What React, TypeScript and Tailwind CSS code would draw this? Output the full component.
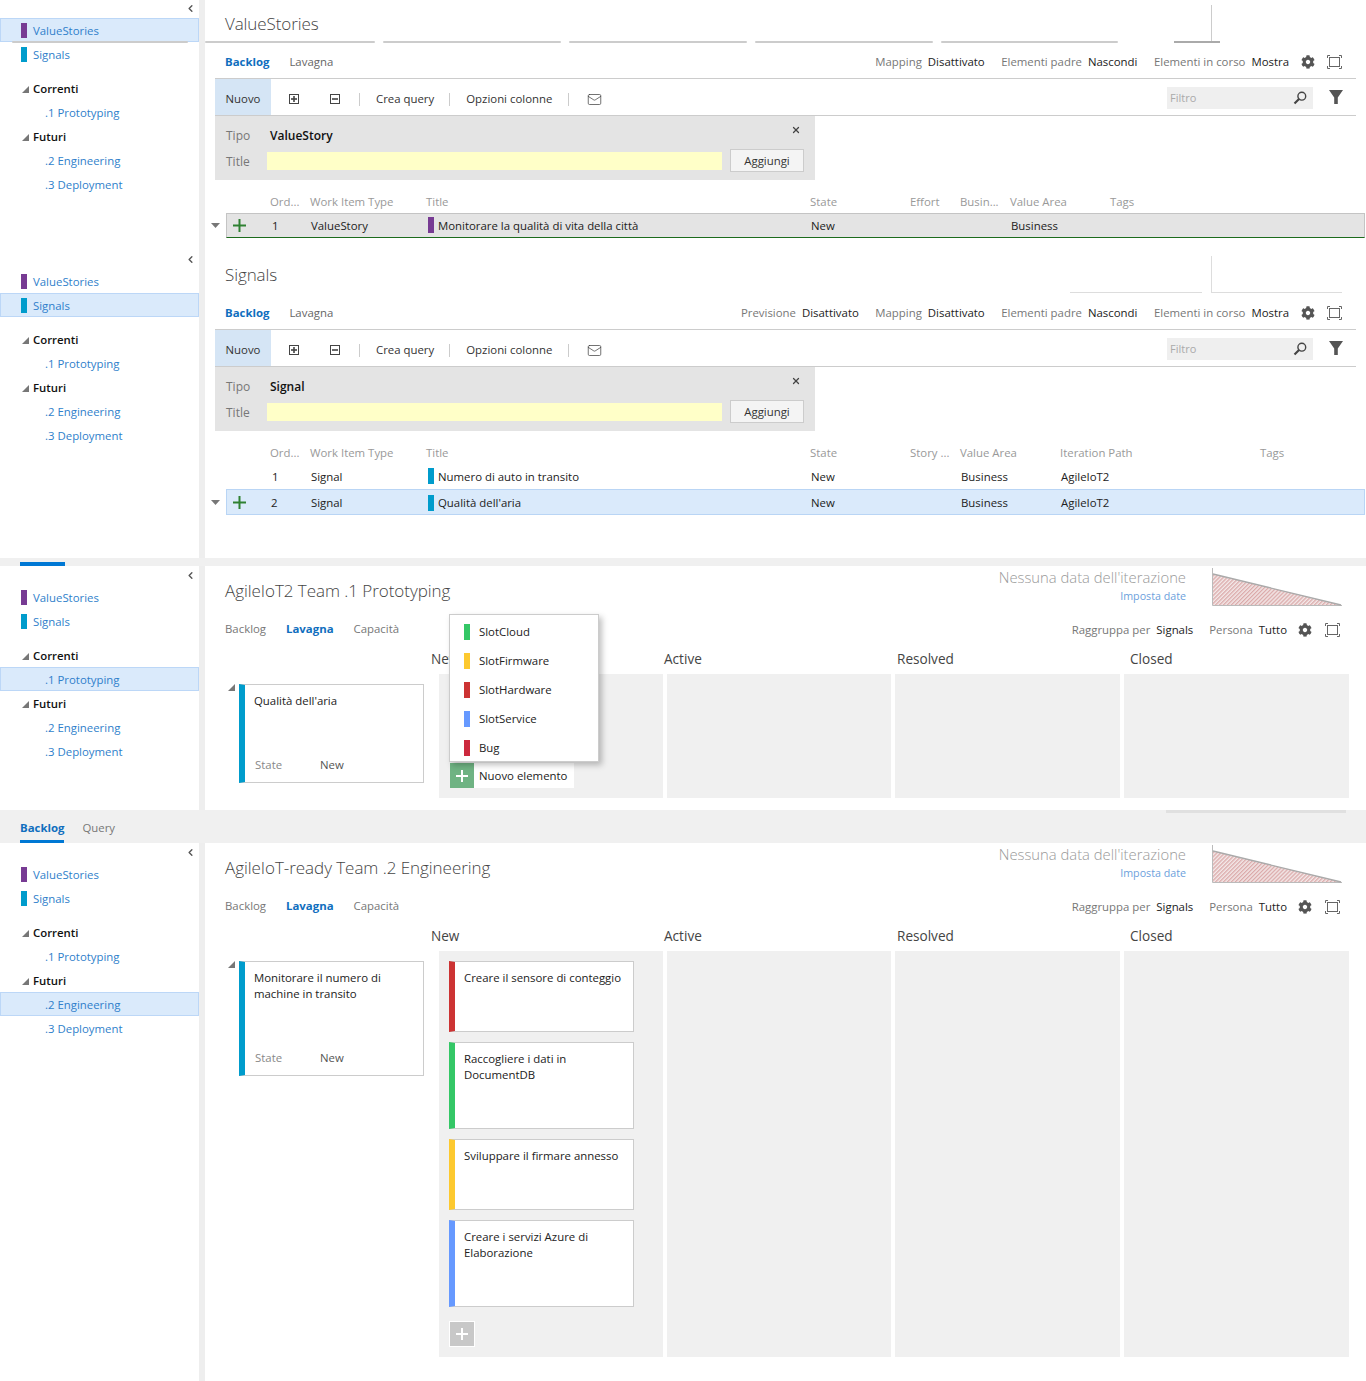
import React from 'react';
import { ChevronLeft, Mail, X } from 'lucide-react';
import { FaCog } from 'react-icons/fa';

const PURPLE = 'bg-[#773b93]';
const CYAN = 'bg-[#009ccc]';

const Tri = ({ className = '' }: { className?: string }) => (
  <svg width="7" height="7" viewBox="0 0 7 7" className={className}>
    <polygon points="7,0 7,7 0,7" fill="#777" />
  </svg>
);

const Caret = () => (
  <svg width="9" height="5" viewBox="0 0 9 5">
    <polygon points="0,0 9,0 4.5,5" fill="#777" />
  </svg>
);

const FocusIcon = () => (
  <svg width="15" height="14" viewBox="0 0 15 14" fill="none" stroke="#666" strokeWidth="1">
    <path d="M.5 3V.5H3M12 .5h2.5V3M14.5 11v2.5H12M3 13.5H.5V11" />
    <rect x="2.5" y="2.5" width="10" height="9" />
  </svg>
);

const BoxIcon = ({ plus }: { plus?: boolean }) => (
  <svg width="10" height="10" viewBox="0 0 10 10" fill="none" stroke="#444">
    <rect x=".5" y=".5" width="9" height="9" />
    <path d="M2 5h6" strokeWidth="1.6" />
    {plus && <path d="M5 2v6" strokeWidth="1.6" />}
  </svg>
);

const Funnel = () => (
  <svg width="14" height="14" viewBox="0 0 14 14">
    <path d="M0 0h14L8.8 7.5V14H5.2V7.5z" fill="#555" />
  </svg>
);

const SearchIcon = () => (
  <svg width="14" height="14" viewBox="0 0 14 14" fill="none" stroke="#444">
    <circle cx="8.8" cy="5.2" r="3.9" strokeWidth="1.4" />
    <path d="M6 8L1.5 12.5" strokeWidth="2.2" />
  </svg>
);

const GreenPlus = () => (
  <svg width="13" height="13" viewBox="0 0 13 13">
    <path d="M6.5 0v13M0 6.5h13" stroke="#2f8132" strokeWidth="2" />
  </svg>
);

const WhitePlus = () => (
  <svg width="12" height="12" viewBox="0 0 12 12">
    <path d="M6 0v12M0 6h12" stroke="#fff" strokeWidth="2" />
  </svg>
);

const Burndown = () => (
  <svg width="131" height="38" viewBox="0 0 131 38" className="mt-[1px]">
    <defs>
      <pattern id="hatch" width="2.8" height="2.8" patternUnits="userSpaceOnUse" patternTransform="rotate(45)">
        <rect width="2.8" height="2.8" fill="#f3e8e8" />
        <rect width="1.3" height="2.8" fill="#dba9a9" />
      </pattern>
    </defs>
    <polygon points="1,6 129,37 1,37" fill="url(#hatch)" />
    <path d="M.5 0v37.5H130" stroke="#bbb" fill="none" />
    <path d="M1 6l128 31" stroke="#aaa" strokeWidth="1.3" fill="none" />
  </svg>
);

function NavRow({ selected, children }: { selected?: boolean; children: React.ReactNode }) {
  return (
    <div className={`h-[24px] pt-[2px] flex items-center text-[#2f7fcb] border ${selected ? 'bg-[#daeafb] border-[#bcd7f7]' : 'border-transparent'}`}>
      {children}
    </div>
  );
}

function Sidebar({ selected, tabLine }: { selected: string; tabLine?: boolean }) {
  return (
    <div className="relative w-[199px] shrink-0 bg-white">
      <div className="h-[18px] flex justify-end items-start pt-[3px] pr-[3px]">
        <ChevronLeft size={11} strokeWidth={3} color="#555" />
      </div>
      <NavRow selected={selected === 'ValueStories'}>
        <span className={`w-[6px] h-[15px] ml-[20px] mr-[6px] mb-[2px] ${PURPLE}`} />ValueStories
      </NavRow>
      <NavRow selected={selected === 'Signals'}>
        <span className={`w-[6px] h-[15px] ml-[20px] mr-[6px] mb-[2px] ${CYAN}`} />Signals
      </NavRow>
      <div className="h-[10px]" />
      <div className="h-[24px] pt-[2px] flex items-center pl-[22px] font-semibold text-[#111]">
        <Tri className="mr-[4px]" />Correnti
      </div>
      <NavRow selected={selected === 'Prototyping'}><span className="pl-[44px]">.1 Prototyping</span></NavRow>
      <div className="h-[24px] pt-[2px] flex items-center pl-[22px] font-semibold text-[#111]">
        <Tri className="mr-[4px]" />Futuri
      </div>
      <NavRow selected={selected === 'Engineering'}><span className="pl-[44px]">.2 Engineering</span></NavRow>
      <NavRow><span className="pl-[44px]">.3 Deployment</span></NavRow>
      {tabLine && <div className="absolute top-[41px] left-[12px] w-[176px] h-[2px] bg-[#ccc] rounded" />}
    </div>
  );
}

const Opt = ({ label, value }: { label: string; value: string }) => (
  <span className="flex gap-[6px]">
    <span className="text-[#777]">{label}</span>
    <span className="text-[#222]">{value}</span>
  </span>
);

const Sep = () => <span className="block w-px h-[13px] bg-[#ccc]" />;

function Toolbar() {
  return (
    <div className="ml-[10px] w-[1141px] h-[37px] flex border-b border-[#ccc] text-[#333]">
      <span className="w-[56px] h-full pt-[4px] flex items-center justify-center bg-[#d5e5f5]">Nuovo</span>
      <div className="flex-1 flex items-center pt-[4px]">
        <span className="ml-[18px]"><BoxIcon plus /></span>
        <span className="ml-[31px]"><BoxIcon /></span>
        <span className="ml-[19px]"><Sep /></span>
        <span className="ml-[16px]">Crea query</span>
        <span className="ml-[15px]"><Sep /></span>
        <span className="ml-[16px]">Opzioni colonne</span>
        <span className="ml-[16px]"><Sep /></span>
        <span className="ml-[18px]"><Mail size={15} strokeWidth={1.2} color="#444" /></span>
        <div className="ml-auto mb-[2px] w-[146px] h-[22px] bg-[#efefef] flex items-center justify-between pl-[3px] pr-[6px] text-[11px] text-[#aaa]">
          Filtro
          <SearchIcon />
        </div>
        <span className="ml-[16px] mr-[13px] mb-[4px]"><Funnel /></span>
      </div>
    </div>
  );
}

function AddForm({ type }: { type: string }) {
  return (
    <div className="ml-[10px] w-[600px] h-[64px] bg-[#e4e4e4] pl-[11px] relative">
      <div className="h-[33px] pt-[6px] flex items-center">
        <span className="w-[44px] text-[#777] text-[12px]">Tipo</span>
        <span className="font-semibold text-[#111] text-[12px]">{type}</span>
      </div>
      <X size={10} strokeWidth={3} color="#444" className="absolute top-[9px] right-[14px]" />
      <div className="flex items-center">
        <span className="w-[41px] pt-[2px] text-[#777] text-[12px]">Title</span>
        <span className="w-[455px] h-[18px] bg-[#ffffc8]" />
        <span className="ml-[8px] w-[74px] h-[23px] bg-[#f4f4f4] border border-[#ccc] flex items-center justify-center text-[#333]">Aggiungi</span>
      </div>
    </div>
  );
}

function Strip({ color }: { color: string }) {
  return <span className={`w-[6px] h-[16px] mr-[4px] ${color}`} />;
}

function BacklogOne() {
  return (
    <div className="flex h-[251px] bg-white">
      <Sidebar selected="ValueStories" tabLine />
      <div className="w-[6px] bg-[#eeeeee]" />
      <div className="flex-1 min-w-0">
        <div className="h-[41px] grid grid-cols-[1006px_1fr]">
          <div className="pl-[20px] pt-[10px] text-[17px] tracking-[-0.1px] leading-[28px] font-light text-[#444]">ValueStories</div>
          <div className="mt-[5px] border-l border-[#ccc]" />
        </div>
        <div className="h-[3px] flex items-start">
          <span className="w-[170px] h-[2px] bg-[#ccc] rounded" />
          <span className="ml-[8px] w-[178px] h-[2px] bg-[#ccc] rounded" />
          <span className="ml-[8px] w-[178px] h-[2px] bg-[#ccc] rounded" />
          <span className="ml-[8px] w-[178px] h-[2px] bg-[#ccc] rounded" />
          <span className="ml-[8px] w-[177px] h-[2px] bg-[#ccc] rounded" />
          <span className="ml-[56px] w-[46px] h-[2px] bg-[#aaa]" />
        </div>
        <div className="h-[35px] pt-[2px] ml-[10px] w-[1141px] flex items-center border-b border-[#ccc] pl-[10px] pr-[14px]">
          <span className="font-bold text-[#106ebe]">Backlog</span>
          <span className="ml-[20px] text-[#666]">Lavagna</span>
          <div className="ml-auto flex items-center gap-[16.5px]">
            <Opt label="Mapping" value="Disattivato" />
            <Opt label="Elementi padre" value="Nascondi" />
            <Opt label="Elementi in corso" value="Mostra" />
            <FaCog size={14} color="#555" className="-ml-[5px]" />
            <span className="-ml-[4px]"><FocusIcon /></span>
          </div>
        </div>
        <Toolbar />
        <AddForm type="ValueStory" />
        <div className="mt-[10px] h-[23px] pt-px pl-[65px] grid grid-cols-[40px_116px_384px_100px_50px_50px_100px_1fr] items-center text-[#999]">
          <span>Ord...</span><span>Work Item Type</span><span>Title</span><span>State</span><span>Effort</span><span>Busin...</span><span>Value Area</span><span>Tags</span>
        </div>
        <div className="flex items-center h-[25px] mr-px">
          <span className="w-[21px] pl-[6px]"><Caret /></span>
          <div className="flex-1 h-full bg-[#e4e4e4] border border-[#c4c4c4] border-b-[#1c6b1c] pl-[6px] flex items-center text-[#222]">
            <GreenPlus />
            <div className="flex-1 pl-[24px] grid grid-cols-[40px_116px_384px_100px_50px_50px_100px_1fr] items-center">
              <span className="pl-[2px]">1</span>
              <span className="pl-[1px]">ValueStory</span>
              <span className="flex items-center pl-[2px]"><Strip color={PURPLE} />Monitorare la qualità di vita della città</span>
              <span className="pl-[1px]">New</span><span /><span />
              <span className="pl-[1px]">Business</span>
            </div>
          </div>
        </div>
      </div>
    </div>
  );
}

function BacklogTwo() {
  return (
    <div className="flex h-[307px] bg-white">
      <Sidebar selected="Signals" />
      <div className="w-[6px] bg-[#eeeeee]" />
      <div className="flex-1 min-w-0">
        <div className="h-[41px] grid grid-cols-[1006px_1fr]">
          <div className="pl-[20px] pt-[10px] text-[17px] tracking-[-0.1px] leading-[28px] font-light text-[#444]">Signals</div>
          <div className="mt-[5px] border-l border-[#ddd]" />
        </div>
        <div className="h-[3px] flex items-start">
          <span className="ml-[865px] w-[132px] h-px bg-[#ddd]" />
          <span className="ml-[9px] w-[131px] h-px bg-[#ddd]" />
        </div>
        <div className="h-[35px] pt-[2px] ml-[10px] w-[1141px] flex items-center border-b border-[#ccc] pl-[10px] pr-[14px]">
          <span className="font-bold text-[#106ebe]">Backlog</span>
          <span className="ml-[20px] text-[#666]">Lavagna</span>
          <div className="ml-auto flex items-center gap-[16.5px]">
            <Opt label="Previsione" value="Disattivato" />
            <Opt label="Mapping" value="Disattivato" />
            <Opt label="Elementi padre" value="Nascondi" />
            <Opt label="Elementi in corso" value="Mostra" />
            <FaCog size={14} color="#555" className="-ml-[5px]" />
            <span className="-ml-[4px]"><FocusIcon /></span>
          </div>
        </div>
        <Toolbar />
        <AddForm type="Signal" />
        <div className="mt-[10px] h-[23px] pt-px pl-[65px] grid grid-cols-[40px_116px_384px_100px_50px_100px_200px_1fr] items-center text-[#999]">
          <span>Ord...</span><span>Work Item Type</span><span>Title</span><span>State</span><span>Story ...</span><span>Value Area</span><span>Iteration Path</span><span>Tags</span>
        </div>
        <div className="h-[25px] pl-[65px] grid grid-cols-[40px_116px_384px_100px_50px_100px_200px_1fr] items-center text-[#222]">
          <span className="pl-[2px]">1</span>
          <span className="pl-[1px]">Signal</span>
          <span className="flex items-center pl-[2px]"><Strip color={CYAN} />Numero di auto in transito</span>
          <span className="pl-[1px]">New</span><span />
          <span className="pl-[1px]">Business</span><span className="pl-[1px]">AgileIoT2</span>
        </div>
        <div className="flex items-center h-[26px] mr-px">
          <span className="w-[21px] pl-[6px]"><Caret /></span>
          <div className="flex-1 h-full bg-[#daeafb] border border-[#b9d5f5] pl-[6px] flex items-center text-[#222]">
            <GreenPlus />
            <div className="flex-1 pl-[24px] pt-[2px] grid grid-cols-[40px_116px_384px_100px_50px_100px_200px_1fr] items-center">
              <span className="pl-[1px]">2</span>
              <span className="pl-[1px]">Signal</span>
              <span className="flex items-center pl-[2px]"><Strip color={CYAN} />Qualità dell'aria</span>
              <span className="pl-[1px]">New</span><span />
              <span className="pl-[1px]">Business</span><span className="pl-[1px]">AgileIoT2</span>
            </div>
          </div>
        </div>
      </div>
    </div>
  );
}

function Card({ color, title, wide, state }: { color: string; title: React.ReactNode; wide: string; state?: boolean }) {
  return (
    <div className={`w-[185px] ${wide} bg-white border border-[#ccc] border-l-[6px] ${color} pl-[9px] pr-[6px] pt-[8px] leading-[16px] text-[#222] flex flex-col`}>
      <div>{title}</div>
      {state && (
        <div className="mt-auto mb-[9px] flex pl-[1px]">
          <span className="w-[65px] text-[#888]">State</span>
          <span className="text-[#555]">New</span>
        </div>
      )}
    </div>
  );
}

function BoardHead({ title }: { title: string }) {
  return (
    <>
      <div className="h-[44px] flex items-start">
        <div className="pl-[20px] pt-[11px] text-[17px] tracking-[-0.05px] leading-[26px] font-light text-[#444] flex-1">{title}</div>
        <div className="text-right">
          <div className="text-[14.8px] leading-[20px] font-light text-[#999]">Nessuna data dell'iterazione</div>
          <div className="mt-px text-[#6d9fdc] text-[10.7px] leading-[16px]">Imposta date</div>
        </div>
        <div className="ml-[26px] mr-[23px] h-[40px]"><Burndown /></div>
      </div>
      <div className="h-[36px] flex items-center pl-[20px] pr-[26px]">
        <span className="text-[#777]">Backlog</span>
        <span className="ml-[20px] font-bold text-[#106ebe]">Lavagna</span>
        <span className="ml-[20px] text-[#777]">Capacità</span>
        <div className="ml-auto mt-[2px] flex items-center gap-[16px]">
          <Opt label="Raggruppa per" value="Signals" />
          <Opt label="Persona" value="Tutto" />
          <FaCog size={14} color="#555" className="-ml-[5px]" />
          <span className="-ml-[3px]"><FocusIcon /></span>
        </div>
      </div>
      <div className="h-[27px] pb-[2px] ml-[226px] grid grid-cols-[233px_233px_233px_1fr] items-center text-[13.6px] text-[#444]">
        <span>New</span><span>Active</span><span>Resolved</span><span>Closed</span>
      </div>
    </>
  );
}

const MENU = [
  { name: 'SlotCloud', color: 'bg-[#34c766]' },
  { name: 'SlotFirmware', color: 'bg-[#fdc92f]' },
  { name: 'SlotHardware', color: 'bg-[#cc3333]' },
  { name: 'SlotService', color: 'bg-[#6699ff]' },
  { name: 'Bug', color: 'bg-[#cc293d]' },
];

function BoardOne() {
  return (
    <div className="flex h-[244px] pt-px bg-white">
      <Sidebar selected="Prototyping" />
      <div className="w-[6px] bg-[#eeeeee] -mt-px" />
      <div className="relative flex-1 min-w-0">
        <BoardHead title="AgileIoT2 Team .1 Prototyping" />
        <div className="flex">
          <div className="w-[234px] shrink-0 pl-[23px] pt-[10px] flex items-start gap-[4px]">
            <Tri />
            <Card color="border-l-[#009ccc]" wide="h-[99px]" title="Qualità dell'aria" state />
          </div>
          <div className="w-[224px] h-[124px] bg-[#f0f0f0] flex flex-col justify-end pl-[11px] pb-[10px]">
            <div className="w-[124px] h-[25px] bg-white flex items-center text-[#222]">
              <span className="w-[24px] h-[25px] bg-[#6fb383] flex items-center justify-center mr-[5px]"><WhitePlus /></span>
              Nuovo elemento
            </div>
          </div>
          <div className="ml-[4px] w-[224px] h-[124px] bg-[#f0f0f0]" />
          <div className="ml-[4px] w-[225px] h-[124px] bg-[#f0f0f0]" />
          <div className="ml-[4px] w-[225px] h-[124px] bg-[#f0f0f0]" />
        </div>
        <div className="absolute left-[244px] top-[47px] w-[150px] h-[148px] bg-white border border-[#ccc] shadow-[3px_3px_6px_rgba(0,0,0,0.25)] py-[2px] text-[#222]">
          {MENU.map((m) => (
            <div key={m.name} className="h-[29px] flex items-center pl-[14px]">
              <span className={`w-[6px] h-[16px] mr-[9px] ${m.color}`} />{m.name}
            </div>
          ))}
        </div>
      </div>
    </div>
  );
}

function BoardTwo() {
  return (
    <div className="flex h-[538px] pt-px bg-white">
      <Sidebar selected="Engineering" />
      <div className="w-[6px] bg-[#eeeeee] -mt-px" />
      <div className="flex-1 min-w-0">
        <BoardHead title="AgileIoT-ready Team .2 Engineering" />
        <div className="flex">
          <div className="w-[234px] shrink-0 pl-[23px] pt-[10px] flex items-start gap-[4px]">
            <Tri />
            <Card color="border-l-[#009ccc]" wide="h-[115px]" title={<>Monitorare il numero di<br />machine in transito</>} state />
          </div>
          <div className="w-[224px] h-[406px] bg-[#f0f0f0] pl-[10px] pt-[10px] flex flex-col gap-[10px]">
            <Card color="border-l-[#cc3333]" wide="h-[71px]" title="Creare il sensore di conteggio" />
            <Card color="border-l-[#34c766]" wide="h-[87px]" title={<>Raccogliere i dati in<br />DocumentDB</>} />
            <Card color="border-l-[#fdc92f]" wide="h-[71px]" title="Sviluppare il firmare annesso" />
            <Card color="border-l-[#6699ff]" wide="h-[87px]" title={<>Creare i servizi Azure di<br />Elaborazione</>} />
            <span className="mt-[4px] w-[26px] h-[26px] bg-[#c8c8c8] border border-white flex items-center justify-center"><WhitePlus /></span>
          </div>
          <div className="ml-[4px] w-[224px] h-[406px] bg-[#f0f0f0]" />
          <div className="ml-[4px] w-[225px] h-[406px] bg-[#f0f0f0]" />
          <div className="ml-[4px] w-[225px] h-[406px] bg-[#f0f0f0]" />
        </div>
      </div>
    </div>
  );
}

export default function App() {
  return (
    <div className="w-[1366px] h-[1381px] overflow-hidden bg-white text-[11.4px] font-['Open_Sans',sans-serif]">
      <BacklogOne />
      <BacklogTwo />
      <div className="h-[8px] bg-[#f0f0f0] flex items-end">
        <span className="ml-[20px] w-[45px] h-[4px] bg-[#0078d4]" />
      </div>
      <BoardOne />
      <div className="h-[33px] bg-[#f0f0f0] relative">
        <span className="absolute top-0 left-[1166px] w-[180px] h-[3px] bg-[#e0e0e0]" />
        <div className="flex h-full pt-[7px] pl-[20px] items-start">
          <span className="h-[26px] border-b-[3px] border-[#0078d4] font-bold text-[#106ebe] leading-[22px]">Backlog</span>
          <span className="ml-[18px] text-[#777] leading-[22px]">Query</span>
        </div>
      </div>
      <BoardTwo />
    </div>
  );
}
